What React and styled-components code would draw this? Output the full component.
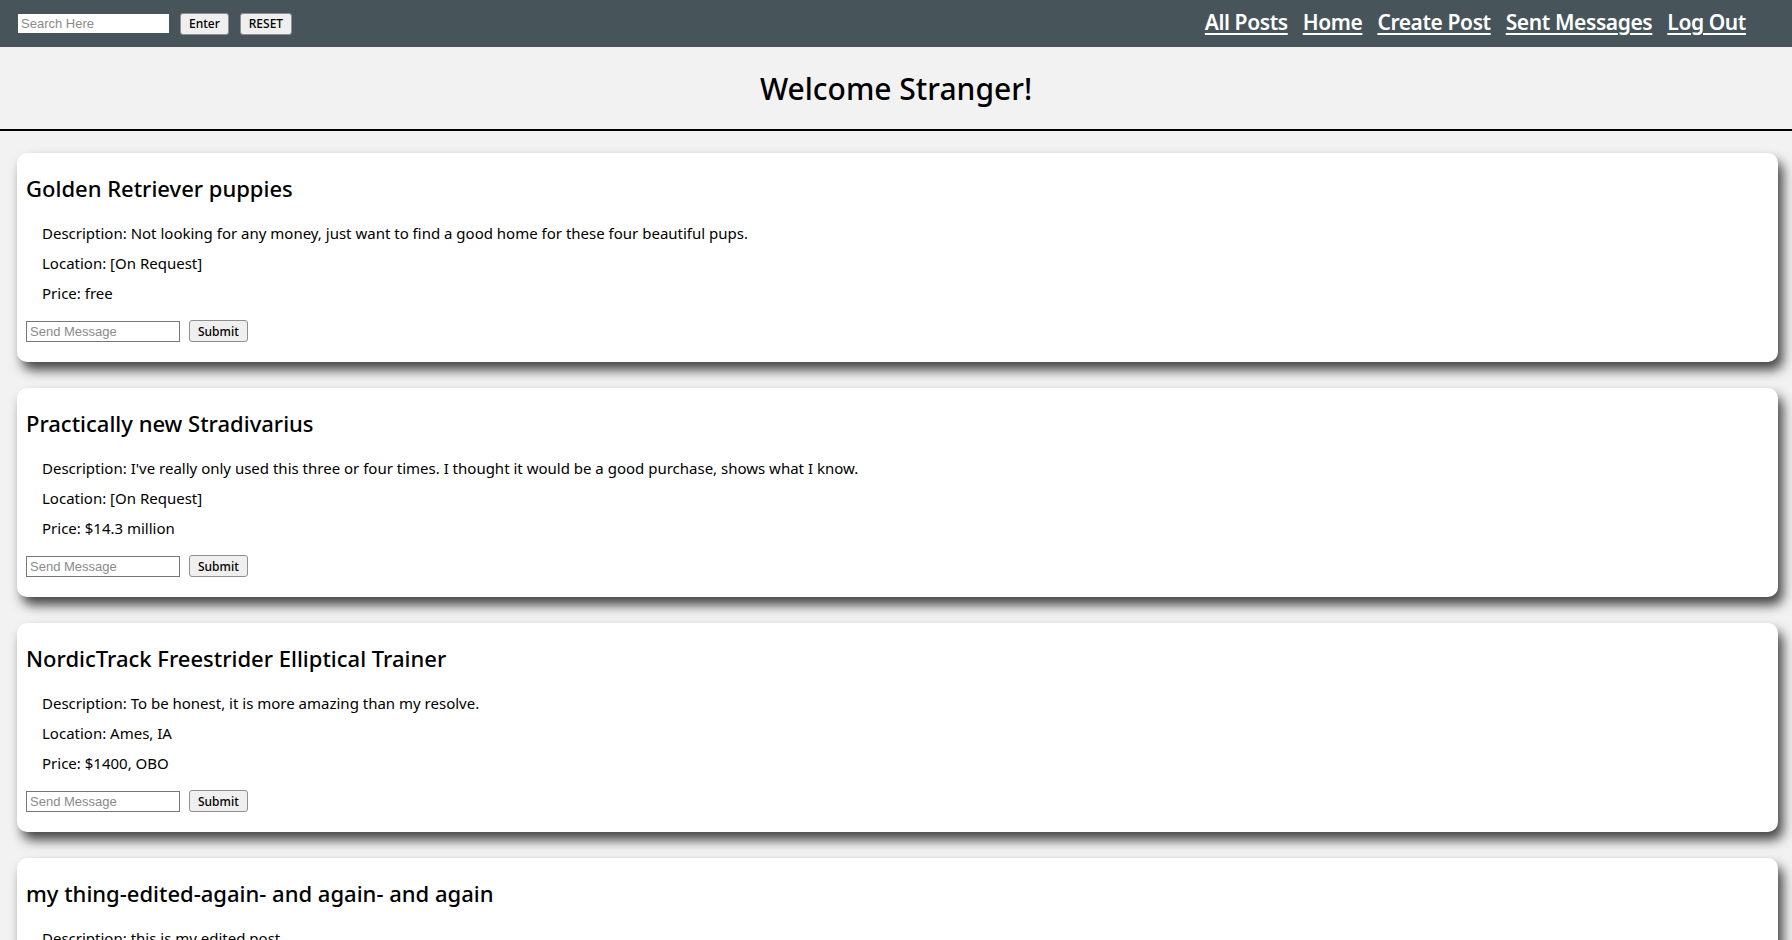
import React from 'react'
import styled, { createGlobalStyle } from 'styled-components'

const posts = [
  {
    title: 'Golden Retriever puppies',
    description: 'Not looking for any money, just want to find a good home for these four beautiful pups.',
    location: '[On Request]',
    price: 'free',
  },
  {
    title: 'Practically new Stradivarius',
    description: "I've really only used this three or four times. I thought it would be a good purchase, shows what I know.",
    location: '[On Request]',
    price: '$14.3 million',
  },
  {
    title: 'NordicTrack Freestrider Elliptical Trainer',
    description: 'To be honest, it is more amazing than my resolve.',
    location: 'Ames, IA',
    price: '$1400, OBO',
  },
  {
    title: 'my thing-edited-again- and again- and again',
    description: 'this is my edited post',
    location: '[On Request]',
    price: 'free',
  },
]

function App() {
  return (
    <>
      <GlobalStyle />
      <NavBar>
        <SearchForm>
          <SearchInput placeholder="Search Here" />
          <SmallButton>Enter</SmallButton>
          <SmallButton>RESET</SmallButton>
        </SearchForm>
        <NavLinks>
          <NavLink href="#">All Posts</NavLink>
          <NavLink href="#">Home</NavLink>
          <NavLink href="#">Create Post</NavLink>
          <NavLink href="#">Sent Messages</NavLink>
          <NavLink href="#">Log Out</NavLink>
        </NavLinks>
      </NavBar>
      <Welcome>Welcome Stranger!</Welcome>
      <PostList>
        {posts.map((post) => (
          <PostCard key={post.title}>
            <PostTitle>{post.title}</PostTitle>
            <Detail>Description: {post.description}</Detail>
            <Detail>Location: {post.location}</Detail>
            <Detail>Price: {post.price}</Detail>
            <MessageForm>
              <MessageInput placeholder="Send Message" />
              <SmallButton>Submit</SmallButton>
            </MessageForm>
          </PostCard>
        ))}
      </PostList>
    </>
  )
}

export default App

const GlobalStyle = createGlobalStyle`
  body {
    margin: 0;
    background: #f2f2f2;
    font-family: "Noto Sans", "Open Sans", sans-serif;
    color: #000;
  }
`

const NavBar = styled.nav`
  height: 47px;
  background: #47555b;
  display: flex;
  align-items: center;
  justify-content: space-between;
  padding: 0 46px 0 18px;
`

const SearchForm = styled.div`
  display: flex;
  align-items: center;
  gap: 11px;
`

const SearchInput = styled.input`
  width: 151px;
  height: 19px;
  box-sizing: border-box;
  border: none;
  padding: 0 3px;
  font-family: "Liberation Sans", Arial, sans-serif;
  font-size: 13px;
  &::placeholder { color: #8a8a8a; }
`

const SmallButton = styled.button`
  height: 22px;
  padding: 0 8px;
  font-family: "Noto Sans", sans-serif;
  font-size: 12px;
  font-weight: 500;
  color: #000;
  background: #efefef;
  border: 1px solid #8f8f8f;
  border-radius: 3px;
`

const NavLinks = styled.div`
  display: flex;
  gap: 15px;
  margin-bottom: 3px;
`

const NavLink = styled.a`
  color: #fff;
  font-size: 21px;
  font-weight: 600;
  text-decoration: underline;
  text-underline-offset: 3px;
  text-decoration-thickness: 2px;
  letter-spacing: -0.4px;
`

const Welcome = styled.h1`
  margin: 0;
  height: 82px;
  display: flex;
  align-items: center;
  justify-content: center;
  font-size: 30px;
  font-weight: 500;
  border-bottom: 2px solid #000;
  background: #f2f2f2;
`

const PostList = styled.main`
  display: flex;
  flex-direction: column;
  gap: 26px;
  padding: 22px 14px 40px 17px;
`

const PostCard = styled.section`
  background: #fff;
  border-radius: 10px;
  padding: 21px 9px 20px;
  box-shadow: 5px 8px 12px rgba(0, 0, 0, 0.72);
`

const PostTitle = styled.h2`
  margin: 0 0 15px;
  font-size: 22px;
  font-weight: 500;
  line-height: 29px;
`

const Detail = styled.p`
  margin: 0;
  padding-left: 16px;
  font-size: 15px;
  line-height: 30px;
`

const MessageForm = styled.div`
  display: flex;
  align-items: center;
  gap: 9px;
  margin-top: 12px;
`

const MessageInput = styled.input`
  width: 154px;
  height: 21px;
  box-sizing: border-box;
  border: 1px solid #767676;
  padding: 0 3px;
  font-family: "Liberation Sans", Arial, sans-serif;
  font-size: 13px;
  &::placeholder { color: #8a8a8a; }
`
